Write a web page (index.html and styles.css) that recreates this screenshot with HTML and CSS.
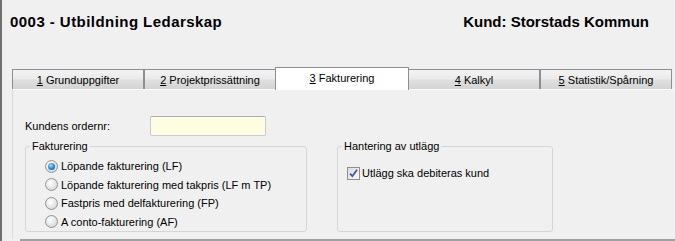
FILE: index.html
```html
<!DOCTYPE html>
<html lang="sv">
<head>
<meta charset="utf-8">
<title>0003 - Utbildning Ledarskap</title>
<link rel="stylesheet" href="styles.css">
</head>
<body>
<div class="win">
  <header class="head">
    <h1 class="title">0003 - Utbildning Ledarskap</h1>
    <div class="cust">Kund: Storstads Kommun</div>
  </header>
  <nav class="tabs">
    <div class="tab"><u>1</u>&nbsp;Grunduppgifter</div>
    <div class="tab"><u>2</u>&nbsp;Projektprissättning</div>
    <div class="tab active"><u>3</u>&nbsp;Fakturering</div>
    <div class="tab"><u>4</u>&nbsp;Kalkyl</div>
    <div class="tab"><u>5</u>&nbsp;Statistik/Spårning</div>
  </nav>
  <section class="panel">
    <div class="order-row">
      <span class="lbl">Kundens ordernr:</span>
      <span class="input"></span>
    </div>
    <div class="groups">
      <fieldset class="group g1">
        <legend>Fakturering</legend>
        <div class="gbody">
          <div class="opt"><span class="radio on"></span>Löpande fakturering (LF)</div>
          <div class="opt"><span class="radio"></span>Löpande fakturering med takpris (LF m TP)</div>
          <div class="opt"><span class="radio"></span>Fastpris med delfakturering (FP)</div>
          <div class="opt"><span class="radio"></span>A conto-fakturering (AF)</div>
        </div>
      </fieldset>
      <fieldset class="group g2">
        <legend>Hantering av utlägg</legend>
        <div class="gbody">
          <div class="chk-row">
            <span class="check"><svg width="9" height="9" viewBox="0 0 9 9"><path d="M1 4.6 L3.4 7.2 L8 0.8" fill="none" stroke="#3d5a9e" stroke-width="1.8"/></svg></span>Utlägg ska debiteras kund
          </div>
        </div>
      </fieldset>
    </div>
  </section>
  <div class="foot"></div>
</div>
</body>
</html>
```
FILE: styles.css
```css
* { box-sizing: border-box; }
html, body { margin: 0; padding: 0; }
body {
  background: #f0f0f0;
  font-family: "Liberation Sans", Arial, sans-serif;
  font-size: 11px;
  color: #000;
  width: 675px;
  height: 241px;
  overflow: hidden;
}
.win {
  border-left: 2px solid #6f6f6f;
  height: 241px;
  display: flex;
  flex-direction: column;
}
.head {
  display: flex;
  justify-content: space-between;
  align-items: baseline;
  padding: 13px 26px 0 8px;
}
.title, .cust {
  margin: 0;
  font-size: 15px;
  line-height: 18px;
  font-weight: bold;
}
.title { letter-spacing: 0.45px; }
.tabs {
  display: flex;
  align-items: flex-end;
  margin: 36px 0 0 10px;
  height: 22px;
}
.tab {
  width: 132px;
  height: 20px;
  display: flex;
  align-items: center;
  justify-content: center;
  border: 1px solid #8c8e94;
  border-bottom: none;
  background: linear-gradient(#f3f3f3 0%, #ebebeb 45%, #dedede 55%, #d4d4d4 100%);
  color: #000;
}
.tab.active {
  height: 23px;
  width: 134px;
  margin: 0 -1px -1px -1px;
  background: #fff;
  position: relative;
  z-index: 1;
  padding-bottom: 2px;
}
.tab u { text-decoration: underline; }
.panel {
  margin-left: 10px;
  border-left: 1px solid #dadada;
  border-top: 1px solid #fbfbfb;
  height: 150px;
  padding: 26px 0 0 12px;
}
.order-row {
  display: flex;
  align-items: center;
  height: 20px;
}
.lbl { width: 125px; }
.input {
  width: 116px;
  height: 20px;
  background: #fffde1;
  border: 1px solid #c5ccd3;
  border-top-color: #abadb3;
  border-radius: 2px;
}
.groups {
  display: flex;
  margin-top: 4px;
}
.group {
  margin: 0;
  border: 1px solid #d5d5d5;
  border-radius: 3px;
  height: 92px;
  padding: 0;
  min-width: 0;
}
.group legend {
  padding: 0 2px;
  margin-left: 4px;
  line-height: 13px;
}
.g1 { width: 282px; }
.g1 .gbody { padding: 4px 0 0 19px; }
.g2 { width: 216px; margin-left: 30px; }
.g2 .gbody { padding: 11px 0 0 9px; }
.opt {
  display: flex;
  align-items: center;
  height: 18.5px;
}
.radio {
  width: 13px;
  height: 13px;
  border-radius: 50%;
  border: 1px solid #949494;
  background: radial-gradient(circle at 40% 35%, #ffffff 0%, #e6e6e6 50%, #c9c9c9 100%);
  margin-right: 3px;
  display: flex;
  align-items: center;
  justify-content: center;
  flex: none;
}
.radio.on::after {
  content: "";
  width: 7px;
  height: 7px;
  border-radius: 50%;
  background: radial-gradient(circle at 40% 35%, #9be0ff 0%, #2a86c8 55%, #0f4c86 100%);
}
.chk-row {
  display: flex;
  align-items: center;
  height: 18px;
}
.check {
  width: 13px;
  height: 13px;
  border: 1px solid #8f8f8f;
  background: linear-gradient(135deg, #dcdcdc, #f8f8f8);
  margin-right: 2px;
  display: flex;
  align-items: center;
  justify-content: center;
  flex: none;
}
.foot {
  margin: auto 0 0 18px;
  height: 2px;
  background: #a0a0a0;
}
```
